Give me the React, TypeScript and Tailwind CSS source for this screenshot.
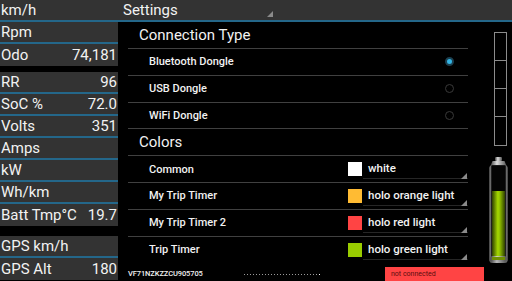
import React from 'react'

type Row = [string, string]

const groups: Row[][] = [
  [['km/h', ''], ['Rpm', ''], ['Odo', '74,181']],
  [['RR', '96'], ['SoC %', '72.0'], ['Volts', '351'], ['Amps', ''], ['kW', ''], ['Wh/km', ''], ['Batt Tmp°C', '19.7']],
  [['GPS km/h', ''], ['GPS Alt', '180']],
]

const connections = [
  { name: 'Bluetooth Dongle', on: true },
  { name: 'USB Dongle', on: false },
  { name: 'WiFi Dongle', on: false },
]

const colors = [
  { name: 'Common', label: 'white', swatch: 'bg-[#ffffff]' },
  { name: 'My Trip Timer', label: 'holo orange light', swatch: 'bg-[#ffbb33]' },
  { name: 'My Trip Timer 2', label: 'holo red light', swatch: 'bg-[#ff4444]' },
  { name: 'Trip Timer', label: 'holo green light', swatch: 'bg-[#99cc00]' },
]

function Corner() {
  return (
    <svg width="6" height="6" viewBox="0 0 6 6" className="absolute right-[1px] bottom-[3px]">
      <polygon points="6,0 6,6 0,6" fill="#8a8a8a" />
    </svg>
  )
}

function Radio({ on }: { on: boolean }) {
  if (on) return <div className="w-[9px] h-[9px] rounded-full bg-[#33b5e5] border-2 border-[#1b3f4f]" />
  return <div className="w-[9px] h-[9px] rounded-full border-[1.5px] border-[#3a3a3a]" />
}

function Battery() {
  return (
    <svg width="21" height="107" viewBox="0 0 21 107">
      <defs>
        <linearGradient id="metal" x1="0" x2="1" y1="0" y2="0">
          <stop offset="0" stopColor="#444" />
          <stop offset="0.4" stopColor="#ddd" />
          <stop offset="1" stopColor="#555" />
        </linearGradient>
        <linearGradient id="glass" x1="0" x2="1" y1="0" y2="0">
          <stop offset="0" stopColor="#9a9a9a" />
          <stop offset="0.15" stopColor="#1a1a1a" />
          <stop offset="0.85" stopColor="#1a1a1a" />
          <stop offset="1" stopColor="#9a9a9a" />
        </linearGradient>
        <linearGradient id="juice" x1="0" x2="1" y1="0" y2="0">
          <stop offset="0" stopColor="#2f4000" />
          <stop offset="0.45" stopColor="#a6d900" />
          <stop offset="0.6" stopColor="#8fbf00" />
          <stop offset="1" stopColor="#2f4000" />
        </linearGradient>
      </defs>
      <rect x="7" y="0" width="7" height="4" rx="1" fill="url(#metal)" />
      <path d="M4.5 4 H16.5 L18.5 9 H2.5 Z" fill="url(#metal)" />
      <rect x="1.5" y="8" width="18" height="98" rx="3" fill="url(#glass)" />
      <rect x="3.5" y="9" width="14" height="95" fill="#050505" />
      <rect x="4" y="34" width="13" height="66" fill="url(#juice)" />
      <rect x="2" y="99" width="17" height="7" rx="2.5" fill="url(#metal)" opacity="0.8" />
      <rect x="4" y="100" width="13" height="3" fill="#6f8f00" />
    </svg>
  )
}

export default function App() {
  return (
    <div className="w-[512px] h-[281px] bg-black flex overflow-hidden font-[Roboto,sans-serif] text-[#f2f2f2]">
      <div className="w-[118px] flex flex-col shrink-0">
        {groups.map((g, gi) => (
          <div key={gi} className={gi === 1 ? 'mt-[6px]' : gi === 2 ? 'mt-[10px]' : ''}>
            {g.map(([label, value]) => (
              <div
                key={label}
                className="h-[22px] bg-[#333333] border-b-2 border-[#24678a] last:border-b-0 flex items-center justify-between pl-px pr-px text-[15px] leading-none"
              >
                <span>{label}</span>
                <span>{value}</span>
              </div>
            ))}
          </div>
        ))}
      </div>

      <div className="flex-1 flex flex-col">
        <div className="h-[22px] bg-[#333333] border-b-2 border-[#24678a] flex items-center">
          <div className="relative w-[156px] h-full flex items-center pl-[5px] text-[15px] leading-none">
            Settings
            <Corner />
          </div>
        </div>

        <div className="flex-1 flex min-h-0">
          <div className="flex-1 flex flex-col min-w-0">
            <div className="flex-1 overflow-hidden pl-[10px] pr-[18px]">
              <div className="h-[27px] border-b border-[#404040] flex items-center pl-[11px] text-[15px] leading-none">
                Connection Type
              </div>
              {connections.map(c => (
                <div key={c.name} className="h-[26.8px] border-b border-[#404040] flex items-center justify-between pl-[21px] pr-[14px] text-[11px] font-medium leading-none">
                  <span>{c.name}</span>
                  <Radio on={c.on} />
                </div>
              ))}
              <div className="h-[26.8px] border-b border-[#404040] flex items-center pl-[11px] text-[15px] leading-none">
                Colors
              </div>
              {colors.map((c, i) => (
                <div key={c.name} className={`h-[26.8px] flex items-center justify-between pl-[21px] text-[11px] font-medium leading-none ${i < colors.length - 1 ? 'border-b border-[#404040]' : ''}`}>
                  <span>{c.name}</span>
                  <div className="relative w-[122px] h-full flex items-center">
                    <div className={`ml-[2px] w-[14px] h-[14px] ${c.swatch}`} />
                    <span className="ml-[6px] text-[11.5px]">{c.label}</span>
                    <div className="absolute left-[17px] right-0 bottom-[3px] h-px bg-[#262626]" />
                    <Corner />
                  </div>
                </div>
              ))}
            </div>
            <div className="h-[18px] flex items-end pl-[10px] pr-[2px]">
              <div className="h-[14px] flex items-center text-[7.5px] font-medium tracking-[-0.1px] leading-none">VF71NZKZZCU905705</div>
              <div className="h-[14px] flex items-center gap-[2px] ml-[41px]">
                {Array.from({ length: 26 }).map((_, i) => (
                  <div key={i} className={`w-px h-px ${i === 25 ? 'bg-white' : 'bg-[#9a9a9a]'}`} />
                ))}
              </div>
              <div className="ml-auto w-[99px] h-[14px] bg-[#ff4444] flex items-center pl-[6px] text-[7px] text-[#5a0e0e] leading-none">
                not connected
              </div>
            </div>
          </div>

          <div className="w-[26px] shrink-0 flex flex-col">
            <div className="mt-[10px] ml-[8px] w-[13px] border border-[#8c8c8c] flex flex-col">
              {[0, 1, 2, 3].map(i => (
                <div key={i} className="h-[28px] border-b border-[#8c8c8c] last:border-b-0" />
              ))}
            </div>
            <div className="mt-[11px] ml-[2px]">
              <Battery />
            </div>
          </div>
        </div>
      </div>
    </div>
  )
}
